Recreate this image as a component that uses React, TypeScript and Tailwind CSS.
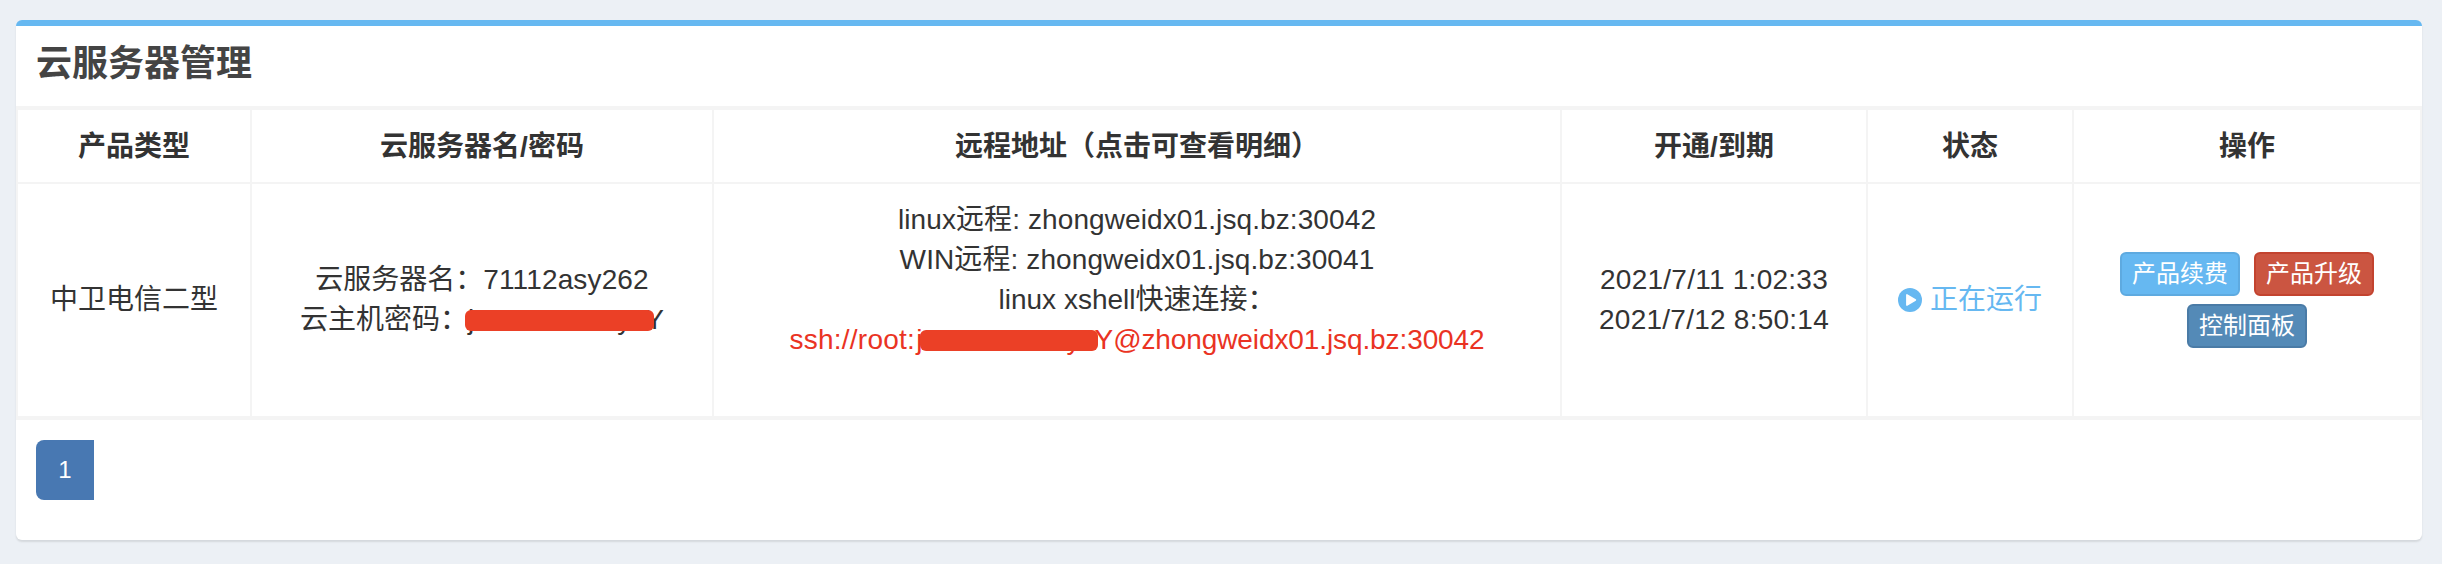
import type { ReactNode } from "react";

const columns = ["产品类型", "云服务器名/密码", "远程地址（点击可查看明细）", "开通/到期", "状态", "操作"];

function Cell({ children }: { children: ReactNode }) {
  return (
    <div className="flex flex-col items-center justify-center whitespace-nowrap border-r-2 border-[#f4f4f4] py-4 leading-10">
      {children}
    </div>
  );
}

function PlayCircle() {
  return (
    <svg viewBox="0 0 24 24" className="mr-2 size-6">
      <circle cx="12" cy="12" r="12" fill="#66b8f1" />
      <path d="M8.9 6.9v10.2L17.4 12z" fill="#fff" stroke="#fff" strokeWidth="1.6" strokeLinejoin="round" />
    </svg>
  );
}

const button = "h-11 w-[120px] rounded-md border-2 text-center text-[24px] leading-[38px] text-white";

export default function App() {
  return (
    <div className="h-[564px] w-[2442px] bg-[#ecf0f5] pl-4 pr-5 pt-5 font-['Liberation_Sans','Noto_Sans_CJK_SC',sans-serif] text-[28px] text-[#333]">
      <section className="h-[520px] w-[2406px] rounded-md border-t-[6px] border-[#66b8f1] bg-white shadow-[0_2px_2px_rgba(0,0,0,0.1)]">
        <header className="flex h-20 items-start px-5 pt-[18px]">
          <h3 className="text-[36px] font-bold leading-[40px] text-[#444]">云服务器管理</h3>
        </header>
        <div className="grid grid-cols-[234px_462px_848px_306px_206px_348px] grid-rows-[72px_234px] border-b-4 border-l-2 border-t-4 border-[#f4f4f4]">
          {columns.map((name) => (
            <div key={name} className="flex items-center justify-center whitespace-nowrap border-r-2 border-[#f4f4f4] pt-0.5 font-bold">
              {name}
            </div>
          ))}
          <div className="col-span-6 grid grid-cols-subgrid border-t-2 border-[#f4f4f4]">
            <Cell>中卫电信二型</Cell>
            <Cell>
              <div>云服务器名：<span className="tracking-[0.15px]">71112asy262</span></div>
              <div className="flex">
                云主机密码：
                <span className="relative flex w-[196px] justify-end">
                  <span className="absolute left-0">j</span>
                  <span className="mr-[14px]">y</span>
                  <span>Y</span>
                  <span className="absolute left-[-3px] top-[10px] h-[21px] w-[189px] rounded-[6px] bg-[#eb4026]" />
                </span>
              </div>
            </Cell>
            <Cell>
              <div className="tracking-[0.1px]">linux远程: zhongweidx01.jsq.bz:30042</div>
              <div className="tracking-[0.1px]">WIN远程: zhongweidx01.jsq.bz:30041</div>
              <div>linux xshell快速连接：</div>
              <a className="flex text-[#ea3323]">
                <span className="tracking-[0.25px]">ssh://root:</span>
                <span className="relative flex w-[198px] justify-end">
                  <span className="absolute left-px">j</span>
                  <span className="mr-[14px]">y</span>
                  <span>Y</span>
                  <span className="absolute left-[5px] top-[10px] h-[21px] w-[178px] rounded-[6px] bg-[#eb4026]" />
                </span>
                <span className="tracking-[-0.1px]">@zhongweidx01.jsq.bz:30042</span>
              </a>
              <div className="h-10" />
            </Cell>
            <Cell>
              <div className="tracking-[0.25px]">2021/7/11 1:02:33</div>
              <div className="tracking-[0.25px]">2021/7/12 8:50:14</div>
            </Cell>
            <Cell>
              <div className="flex items-center text-[#66b8f1]">
                <PlayCircle />
                正在运行
              </div>
            </Cell>
            <Cell>
              <div className="flex gap-[14px]">
                <button className={button + " border-[#5eaae0] bg-[#66b8f1]"}>产品续费</button>
                <button className={button + " border-[#c3432f] bg-[#cb5541]"}>产品升级</button>
              </div>
              <button className={button + " mt-2 border-[#4a7ba6] bg-[#548ab7]"}>控制面板</button>
            </Cell>
          </div>
        </div>
        <nav className="px-5 pt-5">
          <span className="flex h-[60px] w-[58px] items-center justify-center rounded-l-lg bg-[#4878b2] text-[24px] text-white">1</span>
        </nav>
      </section>
    </div>
  );
}
